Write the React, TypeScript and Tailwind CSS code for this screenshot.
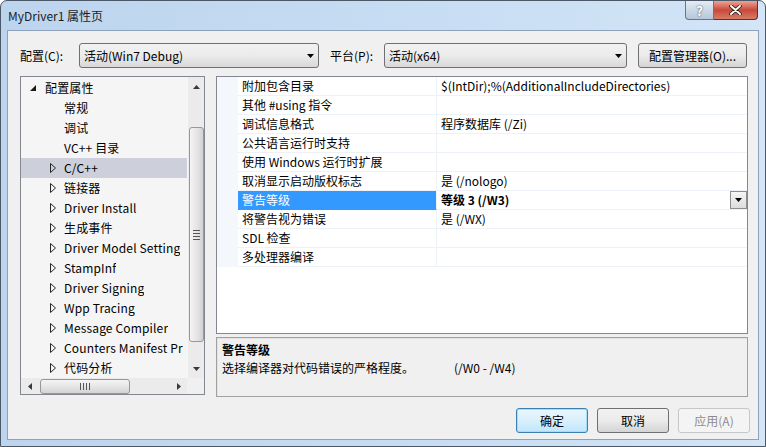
import React from "react";

const FONT = { fontFamily: '"Noto Sans CJK SC", "Noto Sans", sans-serif' };

function Combo({ text, width }: { text: string; width: string }) {
  return (
    <div
      className={`${width} h-[25px] flex items-center justify-between pl-[4px] pr-[4px] rounded-[3px] border border-[#707070] bg-gradient-to-b from-[#f2f2f2] via-[#ebebeb] to-[#d8d8d8] text-[12px] text-black`}
    >
      <span>{text}</span>
      <svg width="7" height="4" viewBox="0 0 7 4">
        <path d="M0 0H7L3.5 4Z" fill="#000" />
      </svg>
    </div>
  );
}

function Btn({
  text,
  kind = "normal",
}: {
  text: string;
  kind?: "normal" | "default" | "disabled";
}) {
  const cls =
    kind === "default"
      ? "border-[#3c7fb1] bg-gradient-to-b from-[#eaf6fd] via-[#d9f0fc] to-[#bee6fd] text-black shadow-[inset_0_0_0_1px_#a8dcf6]"
      : kind === "disabled"
      ? "border-[#c4c8cc] bg-[#f4f4f4] text-[#8d8d8d]"
      : "border-[#707070] bg-gradient-to-b from-[#f2f2f2] via-[#ebebeb] to-[#d4d4d4] text-black";
  return (
    <div
      className={`w-[72px] h-[25px] flex items-center justify-center rounded-[3px] border text-[12px] ${cls}`}
    >
      {text}
    </div>
  );
}

const treeItems: { label: string; kind: "root" | "leaf" | "node"; selected?: boolean }[] = [
  { label: "配置属性", kind: "root" },
  { label: "常规", kind: "leaf" },
  { label: "调试", kind: "leaf" },
  { label: "VC++ 目录", kind: "leaf" },
  { label: "C/C++", kind: "node", selected: true },
  { label: "链接器", kind: "node" },
  { label: "Driver Install", kind: "node" },
  { label: "生成事件", kind: "node" },
  { label: "Driver Model Setting", kind: "node" },
  { label: "StampInf", kind: "node" },
  { label: "Driver Signing", kind: "node" },
  { label: "Wpp Tracing", kind: "node" },
  { label: "Message Compiler", kind: "node" },
  { label: "Counters Manifest Pr", kind: "node" },
  { label: "代码分析", kind: "node" },
];

const props: { name: string; value: string; selected?: boolean }[] = [
  { name: "附加包含目录", value: "$(IntDir);%(AdditionalIncludeDirectories)" },
  { name: "其他 #using 指令", value: "" },
  { name: "调试信息格式", value: "程序数据库 (/Zi)" },
  { name: "公共语言运行时支持", value: "" },
  { name: "使用 Windows 运行时扩展", value: "" },
  { name: "取消显示启动版权标志", value: "是 (/nologo)" },
  { name: "警告等级", value: "等级 3 (/W3)", selected: true },
  { name: "将警告视为错误", value: "是 (/WX)" },
  { name: "SDL 检查", value: "" },
  { name: "多处理器编译", value: "" },
];

function Tree() {
  return (
    <div className="w-[185px] h-[319px] border border-[#828790] bg-[#f5f5f5] flex flex-col">
      <div className="flex flex-1 min-h-0">
        <div className="w-[166px] pt-[1px] overflow-hidden">
          {treeItems.map((it) => (
            <div
              key={it.label}
              className={`h-[20px] flex items-center whitespace-nowrap overflow-hidden text-[12px] text-black tracking-[0.15px] ${
                it.selected ? "bg-[#cdcfdb]" : ""
              }`}
            >
              {it.kind === "root" ? (
                <>
                  <div className="w-[9px] shrink-0" />
                  <svg width="6" height="6" viewBox="0 0 6 6" className="shrink-0">
                    <path d="M6 0V6H0Z" fill="#1a1a1a" />
                  </svg>
                  <div className="w-[9px] shrink-0" />
                  <span>{it.label}</span>
                </>
              ) : it.kind === "node" ? (
                <>
                  <div className="w-[29px] shrink-0" />
                  <svg width="6" height="10" viewBox="0 0 6 10" className="shrink-0">
                    <path d="M0.5 0.5V9.5L5.5 5Z" fill="none" stroke="#262626" strokeWidth="1" />
                  </svg>
                  <div className="w-[8px] shrink-0" />
                  <span className="overflow-hidden">{it.label}</span>
                </>
              ) : (
                <>
                  <div className="w-[43px] shrink-0" />
                  <span>{it.label}</span>
                </>
              )}
            </div>
          ))}
        </div>
        {/* vertical scrollbar */}
        <div className="w-[17px] bg-[#ebebeb] border-l border-[#f7f7f7] flex flex-col items-center">
          <div className="h-[17px] w-full flex items-center justify-center pt-[3px]">
            <svg width="7" height="4" viewBox="0 0 7 4">
              <path d="M0 4H7L3.5 0Z" fill="#3a3a3a" />
            </svg>
          </div>
          <div className="h-[33px]" />
          <div className="w-[15px] h-[215px] rounded-[3px] border border-[#979797] bg-gradient-to-r from-[#f4f4f4] via-[#e6e6e6] to-[#d2d2d2] flex items-center justify-center">
            <div className="flex flex-col gap-[2px]">
              <div className="w-[7px] h-[1px] bg-[#555]" />
              <div className="w-[7px] h-[1px] bg-[#555]" />
              <div className="w-[7px] h-[1px] bg-[#555]" />
              <div className="w-[7px] h-[1px] bg-[#555]" />
            </div>
          </div>
          <div className="flex-1" />
          <div className="h-[17px] w-full flex items-center justify-center pb-[2px]">
            <svg width="7" height="4" viewBox="0 0 7 4">
              <path d="M0 0H7L3.5 4Z" fill="#3a3a3a" />
            </svg>
          </div>
        </div>
      </div>
      {/* horizontal scrollbar */}
      <div className="h-[16px] flex">
        <div className="w-[166px] bg-[#ebebeb] flex items-center">
          <div className="w-[17px] h-full flex items-center justify-center">
            <svg width="4" height="7" viewBox="0 0 4 7">
              <path d="M4 0V7L0 3.5Z" fill="#3a3a3a" />
            </svg>
          </div>
          <div className="w-[2px]" />
          <div className="w-[90px] h-[15px] rounded-[3px] border border-[#979797] bg-gradient-to-b from-[#f4f4f4] via-[#e6e6e6] to-[#d2d2d2] flex items-center justify-center">
            <div className="flex gap-[2px]">
              <div className="w-[1px] h-[7px] bg-[#555]" />
              <div className="w-[1px] h-[7px] bg-[#555]" />
              <div className="w-[1px] h-[7px] bg-[#555]" />
              <div className="w-[1px] h-[7px] bg-[#555]" />
            </div>
          </div>
          <div className="flex-1" />
          <div className="w-[17px] h-full flex items-center justify-center">
            <svg width="4" height="7" viewBox="0 0 4 7">
              <path d="M0 0V7L4 3.5Z" fill="#3a3a3a" />
            </svg>
          </div>
        </div>
        <div className="w-[17px] bg-[#f0f0f0]" />
      </div>
    </div>
  );
}

function Grid() {
  return (
    <div className="w-[532px] h-[258px] border border-[#828790] bg-white">
      {props.map((p) => (
        <div key={p.name} className="h-[19px] flex">
          <div className="w-[21px] bg-[#f4f7fc]" />
          <div
            className={`w-[199px] border-b border-r border-[#edf1f8] pl-[4px] flex items-center text-[12px] ${
              p.selected ? "bg-[#3399ff] text-white border-b-[#3399ff]" : "text-black"
            }`}
          >
            {p.name}
          </div>
          <div
            className={`flex-1 border-b border-[#edf1f8] pl-[4px] flex items-center justify-between text-[12px] text-black ${
              p.selected ? "font-bold" : ""
            }`}
          >
            <span>{p.value}</span>
            {p.selected && (
              <div className="w-[17px] h-[18px] border border-[#8d8d8d] bg-gradient-to-b from-[#f6f6f6] to-[#dcdcdc] flex items-center justify-center">
                <svg width="7" height="4" viewBox="0 0 7 4">
                  <path d="M0 0H7L3.5 4Z" fill="#000" />
                </svg>
              </div>
            )}
          </div>
        </div>
      ))}
    </div>
  );
}

export default function App() {
  return (
    <div className="w-[766px] h-[447px] bg-white overflow-hidden" style={FONT}>
      <div className="w-full h-full rounded-t-[7px] border border-[#4a5868] bg-gradient-to-r from-[#bcd4ee] via-[#c6dcf3] to-[#d3e5f7] flex flex-col">
        {/* title bar */}
        <div className="h-[29px] flex items-start justify-between">
          <div className="pl-[7px] pt-[6px] text-[12px] text-[#1e1e1e]">MyDriver1 属性页</div>
          <div className="flex mr-[7px]">
            <div className="w-[29px] h-[19px] rounded-bl-[4px] border border-t-0 border-[#67778a] bg-gradient-to-b from-[#e4ecf5] via-[#cdd9e6] to-[#b6c7da] flex items-center justify-center">
              <span className="text-[13px] font-bold text-white [text-shadow:0_0_2px_#2b3b52] leading-none">?</span>
            </div>
            <div className="w-[44px] h-[19px] rounded-br-[4px] border border-t-0 border-l-0 border-[#6b2a22] bg-gradient-to-b from-[#e8a595] via-[#c8483a] to-[#d67b66] flex items-center justify-center">
              <svg width="13" height="10" viewBox="0 0 13 10">
                <path d="M2 1L11 9M11 1L2 9" stroke="#2b1510" strokeWidth="3.6" strokeLinecap="round" />
                <path d="M2 1L11 9M11 1L2 9" stroke="#ffffff" strokeWidth="2" strokeLinecap="round" />
              </svg>
            </div>
          </div>
        </div>
        {/* client area */}
        <div className="flex-1 mx-[6px] mb-[6px] border border-[#8ea3bb] bg-[#f0f0f0] flex flex-col text-[12px] text-black">
          <div className="h-[25px] mt-[12px] flex items-center">
            <span className="ml-[12px] w-[59px]">配置(C):</span>
            <Combo text="活动(Win7 Debug)" width="w-[240px]" />
            <span className="ml-[11px] w-[54px]">平台(P):</span>
            <Combo text="活动(x64)" width="w-[243px]" />
            <div className="ml-[11px] w-[109px] h-[25px] rounded-[3px] border border-[#707070] bg-gradient-to-b from-[#f2f2f2] via-[#ebebeb] to-[#d4d4d4] flex items-center justify-center">
              配置管理器(O)...
            </div>
          </div>
          <div className="mt-[8px] ml-[12px] flex gap-[11px]">
            <Tree />
            <div className="flex flex-col gap-[3px]">
              <Grid />
              <div className="w-[532px] h-[60px] border border-[#a0a0a0] shadow-[inset_1px_1px_0_#e3e3e3] px-[5px] pt-[3px]">
                <div className="font-bold leading-[18px]">警告等级</div>
                <div className="leading-[18px] flex">
                  <span className="w-[232px]">选择编译器对代码错误的严格程度。</span>
                  <span>(/W0 - /W4)</span>
                </div>
              </div>
            </div>
          </div>
          <div className="mt-[11px] mr-[8px] flex justify-end gap-[9px]">
            <Btn text="确定" kind="default" />
            <Btn text="取消" />
            <Btn text="应用(A)" kind="disabled" />
          </div>
        </div>
      </div>
    </div>
  );
}
